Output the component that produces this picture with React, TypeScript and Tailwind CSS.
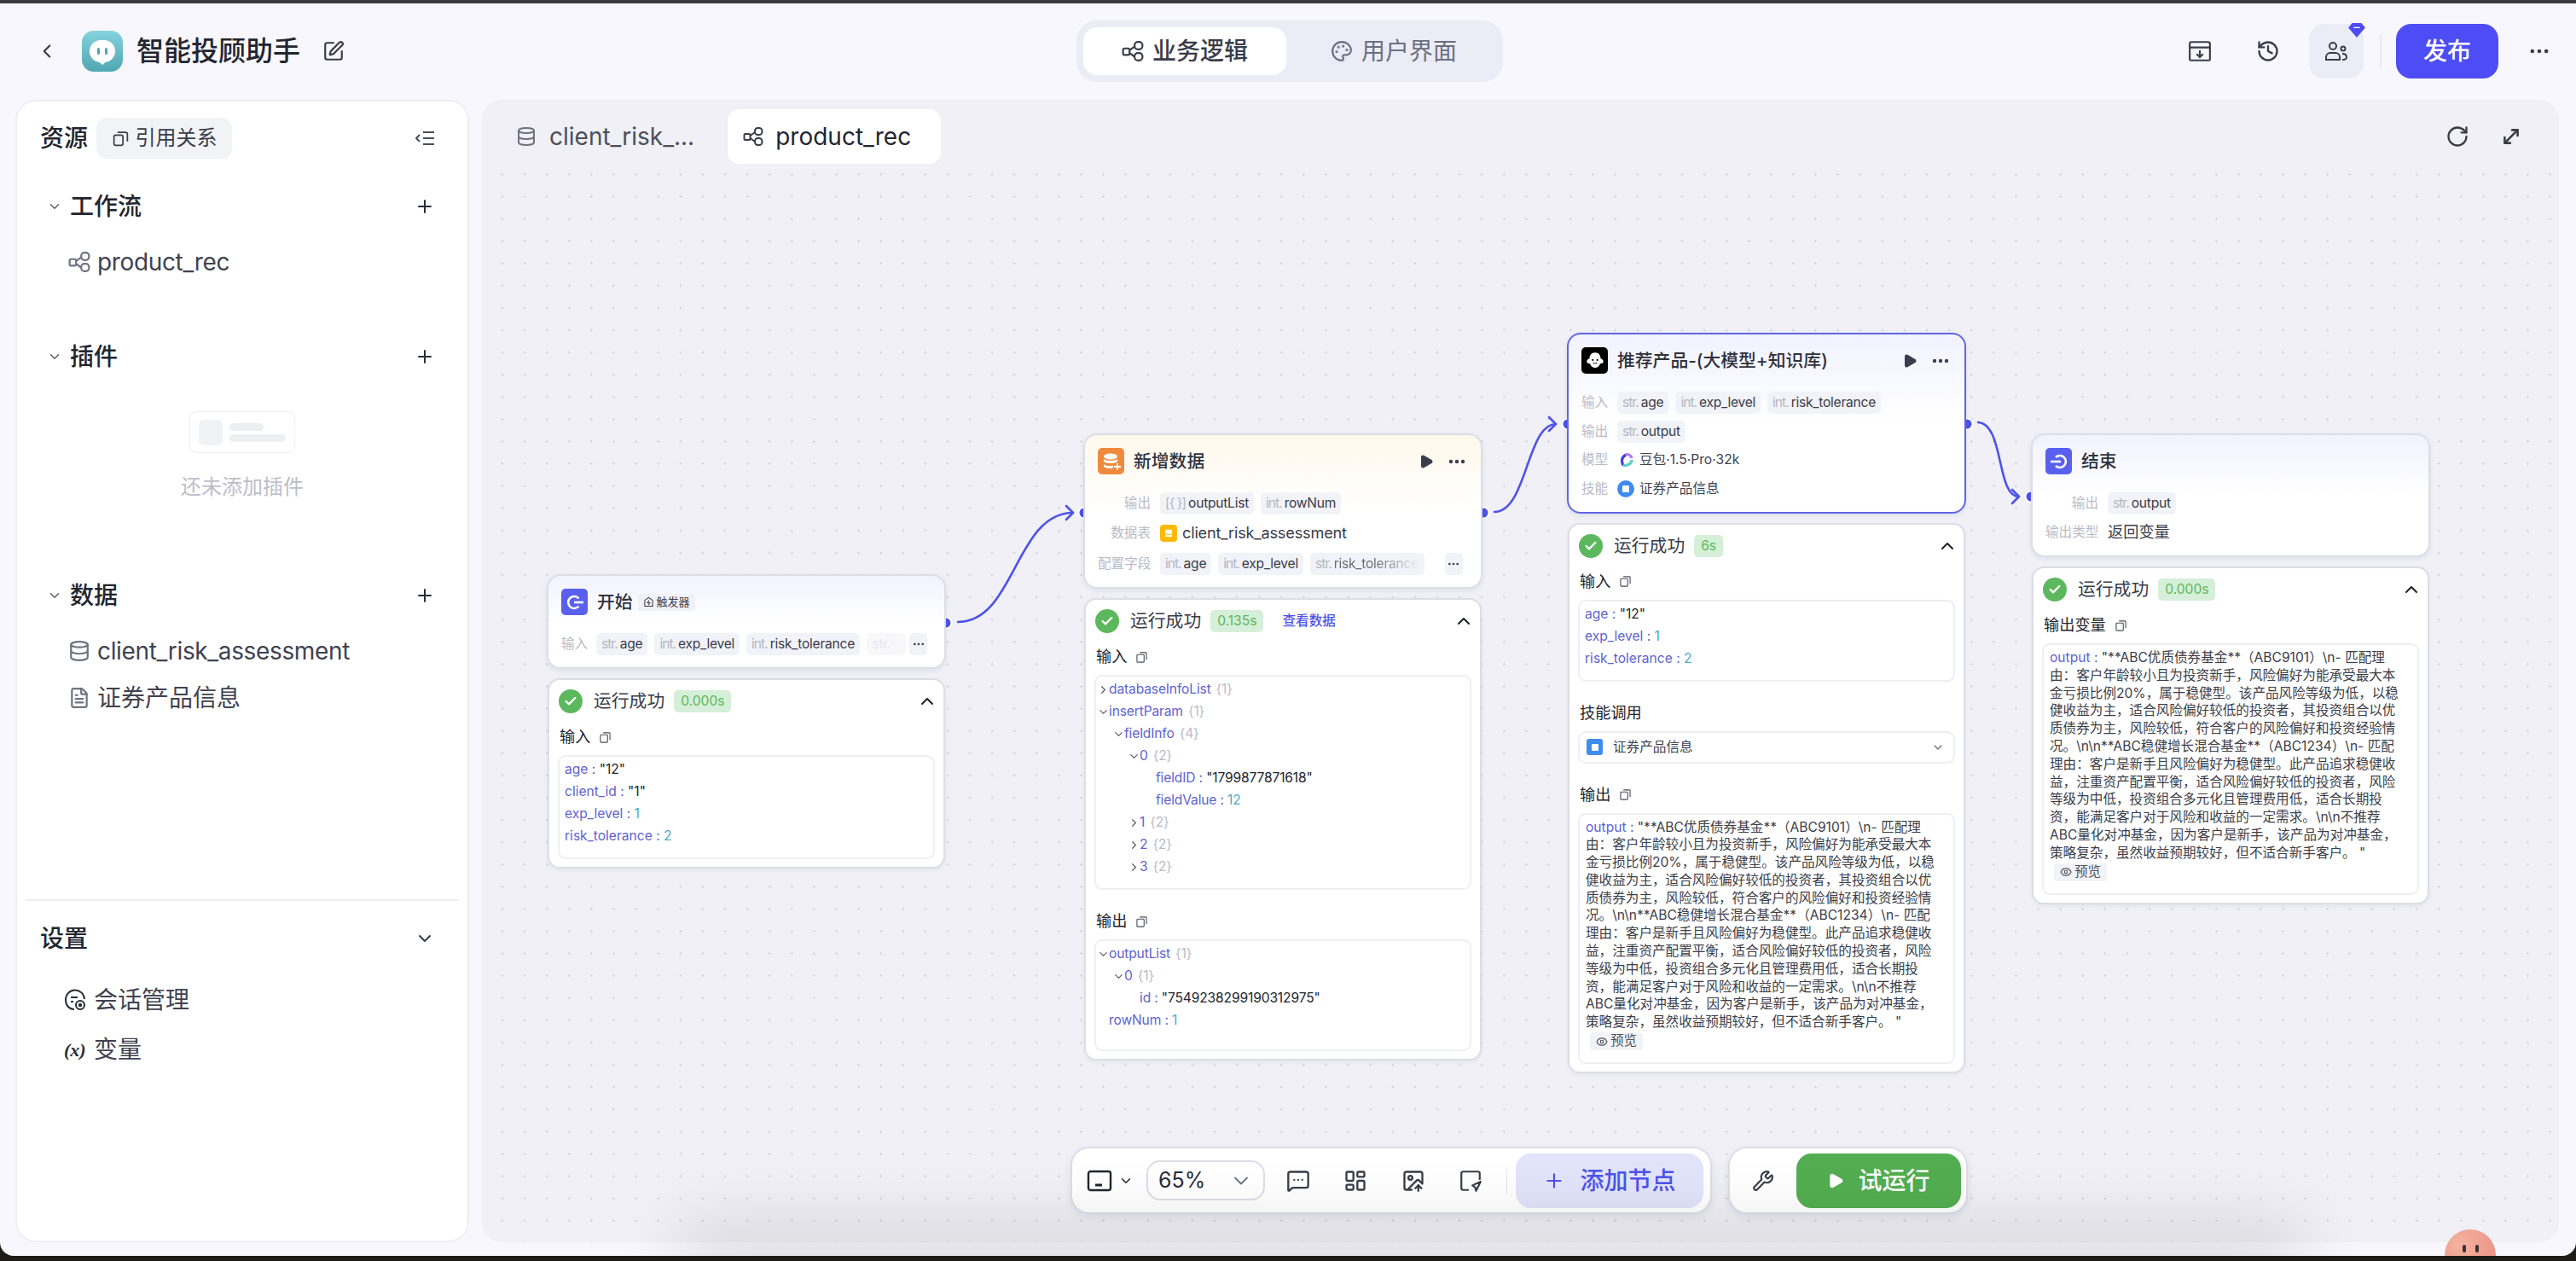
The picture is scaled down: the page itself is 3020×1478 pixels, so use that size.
import {
  Check,
  ChevronDown,
  ChevronLeft,
  ChevronRight,
  ChevronUp,
  Database,
  Ellipsis,
  Eye,
  FileText,
  History,
  ImageUp,
  LayoutDashboard,
  MessageSquareMore,
  MoveDiagonal,
  Palette,
  Play,
  Plus,
  RotateCw,
  SquarePen,
  Wrench,
} from "lucide-react"
import type { ReactNode } from "react"

const OUTPUT_LINES = [
  "由：客户年龄较小且为投资新手，风险偏好为能承受最大本",
  "金亏损比例20%，属于稳健型。该产品风险等级为低，以稳",
  "健收益为主，适合风险偏好较低的投资者，其投资组合以优",
  "质债券为主，风险较低，符合客户的风险偏好和投资经验情",
  "况。\\n\\n**ABC稳健增长混合基金**（ABC1234）\\n- 匹配",
  "理由：客户是新手且风险偏好为稳健型。此产品追求稳健收",
  "益，注重资产配置平衡，适合风险偏好较低的投资者，风险",
  "等级为中低，投资组合多元化且管理费用低，适合长期投",
  "资，能满足客户对于风险和收益的一定需求。\\n\\n不推荐",
  "ABC量化对冲基金，因为客户是新手，该产品为对冲基金，",
  "策略复杂，虽然收益预期较好，但不适合新手客户。 \"",
]

const INDENT = ["pl-[0px]", "pl-[18px]", "pl-[36px]", "pl-[55px]"]

const FlowIcon = ({ className }: { className?: string }) => (
  <svg viewBox="0 0 24 24" fill="none" stroke="currentColor" strokeWidth="2" className={className}>
    <rect x="1.5" y="9" width="7" height="7" rx="1.5" />
    <rect x="14" y="2" width="8.5" height="8" rx="3.5" />
    <rect x="14" y="14" width="8.5" height="8" rx="3.5" />
    <path d="M8.5 11 14 7M8.5 14l5.5 4" />
  </svg>
)

const CopyIcon = () => (
  <svg viewBox="0 0 14 14" fill="none" stroke="#4b4d5a" strokeWidth="1.2" className="ml-[11px] h-[13px] w-[13px]">
    <rect x="1" y="3.5" width="9" height="9.5" rx="1" />
    <path d="M4.5 1h7.5a1 1 0 0 1 1 1v8" />
  </svg>
)

const SuccessIcon = () => (
  <span className="flex h-[28px] w-[28px] shrink-0 items-center justify-center rounded-full bg-[#5cb85c]">
    <Check size={16} strokeWidth={3.5} className="text-white" />
  </span>
)

const Chip = ({ type, name, faded }: { type: string; name?: string; faded?: boolean }) => (
  <span className="flex h-[26px] shrink-0 items-center rounded-[5px] bg-[#f2f3f8] px-[6px] text-[15.6px] whitespace-nowrap">
    <span className="mr-[3px] tracking-[-1px] text-[#b5b7c3]">{type}</span>
    {name && (
      <span
        className={
          faded
            ? "w-[100px] overflow-hidden tracking-[-0.25px] text-[#6a6c78] [mask-image:linear-gradient(to_right,black_45%,transparent)]"
            : "tracking-[-0.25px] text-[#3a3c49]"
        }
      >
        {name}
      </span>
    )}
  </span>
)

const NodeCard = ({
  tint,
  selected,
  icon,
  title,
  titleExtra,
  actions,
  children,
}: {
  tint: string
  selected?: boolean
  icon: ReactNode
  title: string
  titleExtra?: ReactNode
  actions?: boolean
  children: ReactNode
}) => (
  <div
    className={`w-[468px] rounded-[16px] border-2 bg-linear-to-b ${tint} via-white to-white px-[14px] pt-[15px] pb-[14px] shadow-[0_2px_6px_rgba(30,30,60,0.08)] ${
      selected ? "border-[#6166e6]" : "border-[#dcdde6]"
    }`}
  >
    <div className="flex h-[31px] items-center pl-[1px]">
      {icon}
      <span className="ml-[11px] text-[20.8px] font-medium text-[#2f313c]">{title}</span>
      {titleExtra}
      {actions && (
        <div className="ml-auto flex items-center pr-[2px]">
          <Play size={18} fill="#3a3d4c" className="text-[#3a3d4c]" />
          <Ellipsis size={24} strokeWidth={2.4} className="ml-[15px] text-[#3a3d4c]" />
        </div>
      )}
    </div>
    {children}
  </div>
)

const IconTile = ({ className, children }: { className: string; children: ReactNode }) => (
  <span className={`flex h-[31px] w-[31px] shrink-0 items-center justify-center rounded-[5px] ${className}`}>
    {children}
  </span>
)

const RowLabel = ({ children, className }: { children: ReactNode; className: string }) => (
  <span className={`shrink-0 text-[15.6px] whitespace-nowrap text-[#b9bbc6] ${className}`}>{children}</span>
)

const ResultPanel = ({ time, link, children }: { time: string; link?: boolean; children: ReactNode }) => (
  <div className="mx-[1px] mt-[11px] w-[466px] rounded-[14px] border-2 border-[#dcdde6] bg-white px-[10px] pt-[11px] pb-[9px] shadow-[0_2px_5px_rgba(30,30,60,0.06)]">
    <div className="flex h-[28px] items-center pl-[1px]">
      <SuccessIcon />
      <span className="ml-[13px] text-[20.8px] text-[#3a3c48]">运行成功</span>
      <span className="ml-[11px] flex h-[26px] items-center rounded-[5px] bg-[#d6efd8] px-[8px] text-[15.6px] text-[#5cb85c]">
        {time}
      </span>
      {link && <span className="ml-[22px] text-[15.6px] font-medium text-[#4d53e8]">查看数据</span>}
      <ChevronUp size={24} strokeWidth={2} className="-mr-[3px] ml-auto text-[#1f2129]" />
    </div>
    {children}
  </div>
)

const Section = ({ label, first, copy = true }: { label: string; first?: boolean; copy?: boolean }) => (
  <div className={`flex h-[24px] items-center pl-[2px] ${first ? "mt-[16px]" : "mt-[25px]"} mb-[9px]`}>
    <span className="text-[18.2px] text-[#22242c]">{label}</span>
    {copy && <CopyIcon />}
  </div>
)

const Box = ({ tall, children }: { tall?: boolean; children: ReactNode }) => (
  <div
    className={`rounded-[9px] border-2 border-[#eeeff3] px-[6px] pt-[2px] text-[15.6px] ${
      tall ? "pb-[21px]" : "pb-[12px]"
    }`}
  >
    {children}
  </div>
)

const KV = ({ k, v, num }: { k: string; v: string; num?: boolean }) => (
  <div className="flex h-[26px] items-center whitespace-pre">
    <span className="text-[#6063cf]">{k} : </span>
    <span className={num ? "text-[#4fa9c6]" : "text-[#23252d]"}>{v}</span>
  </div>
)

const Tree = ({
  depth,
  open,
  closed,
  k,
  count,
  v,
  num,
}: {
  depth: number
  open?: boolean
  closed?: boolean
  k: string
  count?: string
  v?: string
  num?: boolean
}) => (
  <div className={`-ml-[2px] flex h-[26px] items-center tracking-[-0.15px] whitespace-pre ${INDENT[depth]}`}>
    <span className="flex w-[11px] shrink-0 items-center text-[#5f616f]">
      {open && <ChevronDown size={15} className="-ml-[3px] shrink-0" />}
      {closed && <ChevronRight size={15} className="-ml-[3px] shrink-0" />}
    </span>
    <span className="text-[#6063cf]">{v ? `${k} : ` : k}</span>
    {count && <span className="ml-[6px] text-[#b9bbc6]">{count}</span>}
    {v && <span className={num ? "text-[#4fa9c6]" : "text-[#23252d]"}>{v}</span>}
  </div>
)

const LongOutput = () => (
  <div className="rounded-[9px] border-2 border-[#eeeff3] px-[7px] pt-[5px] pb-[14px] text-[15.6px] leading-[20.8px] text-[#3b3d48]">
    <div className="whitespace-pre">
      <span className="text-[#6063cf]">output : </span>
      {'"**ABC优质债券基金**（ABC9101）\\n- 匹配理'}
    </div>
    {OUTPUT_LINES.map((line) => (
      <div key={line} className="whitespace-pre">
        {line}
      </div>
    ))}
    <div className="mt-[1px] ml-[5px] flex h-[21px] w-[62px] items-center justify-center gap-[3px] rounded-[4px] bg-[#f2f3f7] text-[#4e505c]">
      <Eye size={14} />
      预览
    </div>
  </div>
)

const NavRow = ({ children, className }: { children: ReactNode; className: string }) => (
  <div className={`flex h-[48px] items-center text-[28px] text-[#3f424f] ${className}`}>{children}</div>
)

const SectionHead = ({ title, className }: { title: string; className: string }) => (
  <div className={`flex h-[40px] items-center pl-[35px] pr-[38px] ${className}`}>
    <ChevronDown size={18} className="text-[#5c5f6c]" />
    <span className="ml-[9px] text-[28px] font-medium text-[#23252e]">{title}</span>
    <Plus size={24} className="ml-auto text-[#2b2d38]" />
  </div>
)

const Sidebar = () => (
  <aside className="flex w-[532px] shrink-0 flex-col rounded-[24px] border-2 border-[#eeeff5] bg-white pt-[19px]">
    <div className="flex h-[48px] items-center pl-[27px] pr-[37px]">
      <span className="text-[28px] font-medium text-[#23252e]">资源</span>
      <span className="ml-[10px] flex h-[48px] w-[159px] items-center justify-center gap-[7px] rounded-[12px] bg-[#f2f3f7] text-[24px] text-[#3a3c48]">
        <svg viewBox="0 0 20 20" fill="none" stroke="currentColor" strokeWidth="1.6" className="h-[21px] w-[21px]">
          <rect x="2.5" y="6" width="10" height="11.5" rx="2" />
          <path d="M6.5 3h9a2 2 0 0 1 2 2v8" />
        </svg>
        引用关系
      </span>
      <svg viewBox="0 0 24 24" fill="none" stroke="#4b4d5a" strokeWidth="2" className="ml-auto h-[24px] w-[24px]">
        <path d="M5 8l-4 4 4 4M9 5h13M9 12h13M9 19h13" />
      </svg>
    </div>
    <SectionHead title="工作流" className="mt-[36px]" />
    <NavRow className="mt-[21px] pl-[60px]">
      <FlowIcon className="h-[26px] w-[26px] text-[#6f7280]" />
      <span className="ml-[8px] tracking-[-0.35px]">product_rec</span>
    </NavRow>
    <SectionHead title="插件" className="mt-[67px]" />
    <div className="mt-[44px] flex h-[49px] w-[124px] items-center gap-[8px] self-center rounded-[8px] border border-[#f0f0f4] px-[10px]">
      <span className="h-[30px] w-[30px] rounded-[6px] bg-[#f1f2f5]" />
      <span className="flex flex-col gap-[4px]">
        <span className="h-[9px] w-[40px] rounded-full bg-[#eeeff2]" />
        <span className="h-[9px] w-[66px] rounded-full bg-[#eeeff2]" />
      </span>
    </div>
    <div className="mt-[24px] h-[32px] text-center text-[24px] leading-[32px] text-[#bcbec9]">还未添加插件</div>
    <SectionHead title="数据" className="mt-[91px]" />
    <NavRow className="mt-[21px] pl-[60px]">
      <Database size={26} className="text-[#6f7280]" />
      <span className="ml-[8px] tracking-[-0.35px]">client_risk_assessment</span>
    </NavRow>
    <NavRow className="mt-[7px] pl-[60px]">
      <FileText size={26} className="text-[#6f7280]" />
      <span className="ml-[8px]">证券产品信息</span>
    </NavRow>
    <div className="mx-[10px] mt-[212px] h-[2px] bg-[#eeeff3]" />
    <div className="mt-[24px] flex h-[40px] items-center pl-[27px] pr-[38px]">
      <span className="text-[28px] font-medium text-[#23252e]">设置</span>
      <ChevronDown size={24} className="ml-auto text-[#3a3c48]" />
    </div>
    <NavRow className="mt-[28px] pl-[55px]">
      <svg viewBox="0 0 26 26" fill="none" stroke="#2b2d38" strokeWidth="2" className="h-[26px] w-[26px]">
        <path d="M12 24C6 24 2 19 2 13a11 11 0 0 1 22-1" />
        <path d="M8 10h8M8 15h3" />
        <circle cx="19" cy="19" r="5" />
        <circle cx="19" cy="19" r="1.2" fill="#2b2d38" />
      </svg>
      <span className="ml-[9px]">会话管理</span>
    </NavRow>
    <NavRow className="mt-[10px] pl-[55px]">
      <span className="w-[26px] font-['Liberation_Serif',serif] text-[22px] font-bold text-[#2b2d38] italic">(x)</span>
      <span className="ml-[9px]">变量</span>
    </NavRow>
  </aside>
)

const Connections = () => (
  <svg
    viewBox="0 0 2435 1339"
    fill="none"
    className="absolute top-0 left-0 h-[1339px] w-[2435px]"
  >
    <g stroke="#4d53e8" strokeWidth="2.6" strokeLinecap="round" strokeLinejoin="round">
      <path d="M558 612C625 612 625 484 693 484" />
      <path d="M685 476l8 8-8 8" />
      <path d="M1187 483C1225 483 1225 380 1259 380" />
      <path d="M1251 372l8 8-8 8" />
      <path d="M1754 378C1785 380 1775 465 1802 465" />
      <path d="M1794 457l8 8-8 8" />
    </g>
    <g fill="#4d53e8" stroke="#ffffff" strokeWidth="2">
      <circle cx="544" cy="613" r="6.5" />
      <circle cx="706" cy="484" r="6.5" />
      <circle cx="1174" cy="484" r="6.5" />
      <circle cx="1273" cy="380" r="6.5" />
      <circle cx="1741" cy="380" r="6.5" />
      <circle cx="1816" cy="465" r="6.5" />
    </g>
  </svg>
)

const StartNode = () => (
  <div className="absolute top-[556px] left-[76px]">
    <NodeCard
      tint="from-[#f1f2fe]"
      icon={
        <IconTile className="bg-[#5a60ee]">
          <svg viewBox="0 0 24 24" fill="none" stroke="white" strokeWidth="2.6" className="h-[24px] w-[24px]">
            <path d="M16.5 7.5a7 7 0 1 0 0 9" />
            <path d="M11 12h11" />
          </svg>
        </IconTile>
      }
      title="开始"
      titleExtra={
        <span className="ml-[6px] flex h-[20px] items-center gap-[3px] rounded-[4px] bg-[#f1f2f7] px-[6px] text-[13px] text-[#3a3c48]">
          <svg viewBox="0 0 14 14" fill="none" stroke="currentColor" strokeWidth="1.1" className="h-[13px] w-[13px]">
            <path d="M2 5l5-3.5L12 5v7.5H2z" />
            <path d="M7.5 5 5.5 8h3l-2 3" />
          </svg>
          触发器
        </span>
      }
    >
      <div className="mt-[21px] flex items-center pl-[1px]">
        <RowLabel className="w-[41px]">输入</RowLabel>
        <div className="flex gap-[8px]">
          <Chip type="str." name="age" />
          <Chip type="int." name="exp_level" />
          <Chip type="int." name="risk_tolerance" />
          <span className="flex h-[26px] w-[46px] items-center rounded-[5px] bg-[#f8f8fb] px-[6px] text-[15.6px] text-[#e6e7ee]">
            str.
          </span>
        </div>
        <span className="ml-[4px] flex h-[26px] w-[21px] items-center justify-center rounded-[5px] bg-[#f2f3f8]">
          <Ellipsis size={16} className="text-[#3a3c48]" />
        </span>
      </div>
    </NodeCard>
    <ResultPanel time="0.000s">
      <Section label="输入" first />
      <Box>
        <KV k="age" v={'"12"'} />
        <KV k="client_id" v={'"1"'} />
        <KV k="exp_level" v="1" num />
        <KV k="risk_tolerance" v="2" num />
      </Box>
    </ResultPanel>
  </div>
)

const AddDataNode = () => (
  <div className="absolute top-[391px] left-[705px]">
    <NodeCard
      tint="from-[#fff8ea]"
      actions
      icon={
        <IconTile className="bg-[#ef8a3d]">
          <svg viewBox="0 0 24 24" fill="white" className="h-[24px] w-[24px]">
            <ellipse cx="11" cy="6" rx="8" ry="3.5" />
            <path d="M3 9c2 2.5 14 2.5 16 0v3c-2 2.5-14 2.500-16 0zM3 15c2 2.500 9 2.500 11 1.500v3c-3 1-9 .5-11-1.500z" />
            <path d="M19 14v8M15 18h8" stroke="white" strokeWidth="1.8" />
          </svg>
        </IconTile>
      }
      title="新增数据"
    >
      <div className="mt-[21px] flex h-[26px] items-center pl-[1px]">
        <RowLabel className="w-[62px] text-right">输出</RowLabel>
        <div className="ml-[11px] flex gap-[8px]">
          <Chip type="[{ }]" name="outputList" />
          <Chip type="int." name="rowNum" />
        </div>
      </div>
      <div className="mt-[9px] flex h-[26px] items-center pl-[1px]">
        <RowLabel className="w-[62px] text-right">数据表</RowLabel>
        <span className="ml-[11px] flex h-[20px] w-[20px] items-center justify-center rounded-[4px] bg-[#ffb800]">
          <Database size={12} fill="white" className="text-[#ffb800]" />
        </span>
        <span className="ml-[6px] text-[18.2px] tracking-[-0.2px] text-[#3a3c49]">client_risk_assessment</span>
      </div>
      <div className="mt-[10px] flex h-[26px] items-center pl-[1px]">
        <RowLabel className="w-[62px] text-right">配置字段</RowLabel>
        <div className="ml-[11px] flex gap-[8px]">
          <Chip type="int." name="age" />
          <Chip type="int." name="exp_level" />
          <Chip type="str." name="risk_tolerance" faded />
        </div>
        <span className="ml-[24px] flex h-[26px] w-[21px] items-center justify-center rounded-[5px] bg-[#f2f3f8]">
          <Ellipsis size={16} className="text-[#3a3c48]" />
        </span>
      </div>
    </NodeCard>
    <ResultPanel time="0.135s" link>
      <Section label="输入" first />
      <Box>
        <Tree depth={0} closed k="databaseInfoList" count="{1}" />
        <Tree depth={0} open k="insertParam" count="{1}" />
        <Tree depth={1} open k="fieldInfo" count="{4}" />
        <Tree depth={2} open k="0" count="{2}" />
        <Tree depth={3} k="fieldID" v={'"1799877871618"'} />
        <Tree depth={3} k="fieldValue" v="12" num />
        <Tree depth={2} closed k="1" count="{2}" />
        <Tree depth={2} closed k="2" count="{2}" />
        <Tree depth={2} closed k="3" count="{2}" />
      </Box>
      <Section label="输出" />
      <Box tall>
        <Tree depth={0} open k="outputList" count="{1}" />
        <Tree depth={1} open k="0" count="{1}" />
        <Tree depth={2} k="id" v={'"7549238299190312975"'} />
        <Tree depth={0} k="rowNum" v="1" num />
      </Box>
    </ResultPanel>
  </div>
)

const LlmNode = () => (
  <div className="absolute top-[273px] left-[1272px]">
    <NodeCard
      tint="from-[#f1f2fe]"
      selected
      actions
      icon={
        <IconTile className="bg-black">
          <svg viewBox="0 0 24 24" className="h-[26px] w-[26px]">
            <path
              fill="white"
              d="M12 3c4 0 6 3 6 6.500 2 .5 3 2 3 3.500s-2 2-3.500 2c-1 3-3.500 4.500-5.500 4.500S7.500 18 6.500 15C5 15 3 14.500 3 13s1-3 3-3.500C6 6 8 3 12 3z"
            />
            <circle cx="9.500" cy="11" r="1" fill="black" />
            <circle cx="14.500" cy="11" r="1" fill="black" />
            <path d="M10 14c1 1 3 1 4 0" stroke="black" strokeWidth="1" fill="none" />
          </svg>
        </IconTile>
      }
      title="推荐产品-(大模型+知识库)"
    >
      <div className="mt-[21px] flex h-[26px] items-center pl-[1px]">
        <RowLabel className="w-[42px]">输入</RowLabel>
        <div className="flex gap-[8px]">
          <Chip type="str." name="age" />
          <Chip type="int." name="exp_level" />
          <Chip type="int." name="risk_tolerance" />
        </div>
      </div>
      <div className="mt-[7.5px] flex h-[26px] items-center pl-[1px]">
        <RowLabel className="w-[42px]">输出</RowLabel>
        <Chip type="str." name="output" />
      </div>
      <div className="mt-[7.5px] flex h-[26px] items-center pl-[1px] text-[15.6px] text-[#3f4150]">
        <RowLabel className="w-[42px]">模型</RowLabel>
        <svg viewBox="0 0 20 20" fill="none" strokeWidth="3.4" className="ml-[1px] h-[20px] w-[20px]">
          <path d="M6 16.500C3.500 12 4 7 9 4" stroke="#4d3fe0" />
          <path d="M9 4c3 -1 6 1 7 4" stroke="#b577ea" />
          <path d="M16 10c0 4-4 7-10 6.500" stroke="#63d0bf" />
        </svg>
        <span className="ml-[5px]">豆包·1.5·Pro·32k</span>
      </div>
      <div className="mt-[7.5px] flex h-[26px] items-center pl-[1px] text-[15.6px] text-[#3f4150]">
        <RowLabel className="w-[42px]">技能</RowLabel>
        <span className="flex h-[20px] w-[20px] items-center justify-center rounded-full bg-[#3f8cf0]">
          <span className="h-[8px] w-[8px] rounded-[1px] bg-white" />
        </span>
        <span className="ml-[6px]">证券产品信息</span>
      </div>
    </NodeCard>
    <ResultPanel time="6s">
      <Section label="输入" first />
      <Box>
        <KV k="age" v={'"12"'} />
        <KV k="exp_level" v="1" num />
        <KV k="risk_tolerance" v="2" num />
      </Box>
      <Section label="技能调用" copy={false} />
      <div className="flex h-[38px] items-center rounded-[9px] border-2 border-[#eeeff3] pr-[10px] pl-[8px] text-[15.6px] text-[#3f4150]">
        <span className="flex h-[19px] w-[19px] items-center justify-center rounded-[3px] bg-[#3f8cf0]">
          <span className="h-[8px] w-[8px] rounded-[1px] bg-white" />
        </span>
        <span className="ml-[12px]">证券产品信息</span>
        <ChevronDown size={16} className="ml-auto text-[#6f7180]" />
      </div>
      <Section label="输出" />
      <LongOutput />
    </ResultPanel>
  </div>
)

const EndNode = () => (
  <div className="absolute top-[391px] left-[1816px]">
    <NodeCard
      tint="from-[#f1f2fe]"
      icon={
        <IconTile className="bg-[#5a60ee]">
          <svg viewBox="0 0 24 24" fill="none" stroke="white" strokeWidth="2.6" className="h-[24px] w-[24px]">
            <path d="M8 7a7 7 0 1 1 0 10" />
            <path d="M2 12h12" />
          </svg>
        </IconTile>
      }
      title="结束"
    >
      <div className="mt-[21px] flex h-[26px] items-center pl-[1px]">
        <RowLabel className="w-[62px] text-right">输出</RowLabel>
        <div className="ml-[11px]">
          <Chip type="str." name="output" />
        </div>
      </div>
      <div className="mt-[8px] flex h-[26px] items-center pl-[1px]">
        <RowLabel className="w-[62px] text-right">输出类型</RowLabel>
        <span className="ml-[11px] text-[18.2px] text-[#3a3c49]">返回变量</span>
      </div>
    </NodeCard>
    <ResultPanel time="0.000s">
      <Section label="输出变量" first />
      <LongOutput />
    </ResultPanel>
  </div>
)

const Toolbar = () => (
  <div className="absolute top-[1227px] left-[690px] flex gap-[19px]">
    <div className="flex h-[79px] w-[752px] items-center rounded-[22px] border-2 border-[#dcdde6] bg-white pr-[6px] pl-[17px] shadow-[0_3px_10px_rgba(30,30,60,0.08)]">
      <svg viewBox="0 0 30 26" fill="none" stroke="#23252e" strokeWidth="2.4" className="h-[26px] w-[30px]">
        <rect x="2" y="2" width="26" height="22" rx="2.500" />
        <path d="M10 18h8" strokeWidth="3" />
      </svg>
      <ChevronDown size={18} className="ml-[7px] text-[#23252e]" />
      <div className="ml-[15px] flex h-[47px] w-[139px] items-center rounded-[16px] border-2 border-[#dcdde6] px-[12px] text-[25px] text-[#2b2d38]">
        65%
        <ChevronDown size={28} strokeWidth={1.6} className="ml-auto text-[#6f7180]" />
      </div>
      <MessageSquareMore size={28} className="ml-[25px] text-[#3a3c48]" />
      <LayoutDashboard size={28} className="ml-[39px] text-[#3a3c48]" />
      <ImageUp size={28} className="ml-[40px] text-[#3a3c48]" />
      <svg viewBox="0 0 26 26" fill="none" stroke="#3a3c48" strokeWidth="2" className="ml-[39px] h-[28px] w-[28px]">
        <path d="M11 23H5a2 2 0 0 1-2-2V5a2 2 0 0 1 2-2h16a2 2 0 0 1 2 2v7" />
        <path d="M24 14l-9 4 3 2 1 4z" strokeLinejoin="round" />
      </svg>
      <span className="ml-[28px] h-[32px] w-[1px] bg-[#e3e4ea]" />
      <div className="ml-[10px] flex h-[64px] w-[220px] items-center justify-center gap-[17px] rounded-[18px] bg-[#e2e4fb] text-[28px] font-medium text-[#4d53e8]">
        <Plus size={26} />
        添加节点
      </div>
    </div>
    <div className="flex h-[79px] w-[281px] items-center rounded-[22px] border-2 border-[#dcdde6] bg-white pr-[6px] pl-[26px] shadow-[0_3px_10px_rgba(30,30,60,0.08)]">
      <Wrench size={26} className="text-[#3a3c48]" />
      <div className="ml-auto flex h-[64px] w-[193px] items-center justify-center gap-[16px] rounded-[18px] bg-[#52ae50] text-[28px] font-medium text-white">
        <Play size={20} fill="white" />
        试运行
      </div>
    </div>
  </div>
)

const Canvas = () => (
  <main className="relative flex-1 rounded-[24px] bg-[#f0f0f6] bg-[radial-gradient(#c9cad5_0.9px,transparent_1.2px)] bg-[size:26.1px_26.1px] bg-[position:11px_-4px]">
    <div className="relative flex h-[75px] items-center rounded-t-[24px] bg-[#f0f0f6] pt-[11px] pr-[43px] pl-[40px]">
      <Database size={24} className="text-[#6f7280]" />
      <span className="ml-[15px] text-[28px] text-[#4b4e5b]">client_risk_...</span>
      <div className="ml-[39px] flex h-[64px] w-[250px] items-center rounded-[14px] bg-white pl-[18px] text-[28px] text-[#23252e]">
        <FlowIcon className="h-[24px] w-[24px] text-[#3a3c48]" />
        <span className="ml-[14px]">product_rec</span>
      </div>
      <RotateCw size={28} className="ml-auto text-[#3a3c48]" />
      <MoveDiagonal size={26} strokeWidth={2.4} className="ml-[36px] text-[#3a3c48]" />
    </div>
    <Connections />
    <StartNode />
    <AddDataNode />
    <LlmNode />
    <EndNode />
    <Toolbar />
  </main>
)

const Header = () => (
  <header className="flex h-[113px] shrink-0 items-center pb-[1px] text-[#23252e]">
    <div className="flex w-[1262px] items-center pl-[42px]">
      <ChevronLeft size={26} className="text-[#3a3c48]" />
      <span className="relative ml-[28px] flex h-[48px] w-[48px] items-center justify-center rounded-[14px] bg-linear-to-b from-[#84d3df] to-[#4fa7b1]">
        <span className="flex h-[26px] w-[30px] items-center justify-center gap-[6px] rounded-[14px] bg-white">
          <span className="h-[8px] w-[3px] rounded-full bg-[#4fa7b1]" />
          <span className="h-[8px] w-[3px] rounded-full bg-[#4fa7b1]" />
        </span>
        <span className="absolute top-[33px] left-[21px] h-[6px] w-[6px] rotate-45 bg-white" />
      </span>
      <span className="ml-[16px] text-[32px] font-medium">智能投顾助手</span>
      <SquarePen size={26} className="ml-[26px] text-[#3a3c48]" />
    </div>
    <div className="flex h-[72px] w-[500px] items-center rounded-[24px] bg-[#ebecf6] px-[8px] text-[28px]">
      <div className="flex h-[56px] w-[238px] items-center justify-center gap-[10px] rounded-[16px] bg-white font-medium text-[#3a3c48]">
        <FlowIcon className="h-[26px] w-[26px]" />
        业务逻辑
      </div>
      <div className="flex h-[56px] flex-1 items-center justify-center gap-[10px] pl-[6px] text-[#6c6f80]">
        <Palette size={26} />
        用户界面
      </div>
    </div>
    <div className="flex flex-1 items-center">
      <svg viewBox="0 0 26 26" fill="none" stroke="#3a3c48" strokeWidth="2" className="ml-[803px] h-[28px] w-[28px]">
        <path d="M2 9V5a2 2 0 0 1 2-2h18a2 2 0 0 1 2 2v4M2 9v13a1 1 0 0 0 1 1h20a1 1 0 0 0 1-1V9z" />
        <path d="M13 12v7M9.500 16l3.500 3.500 3.500-3.500" />
      </svg>
      <History size={28} className="ml-[52px] text-[#3a3c48]" />
      <span className="relative ml-[34px] flex h-[64px] w-[64px] items-center justify-center rounded-[18px] bg-[#ebecf6]">
        <svg viewBox="0 0 28 24" fill="none" stroke="#3a3c48" strokeWidth="2" className="h-[24px] w-[28px]">
          <circle cx="10" cy="6" r="4" />
          <path d="M2 22v-3a5 5 0 0 1 5-5h6a5 5 0 0 1 5 5v3z" />
          <circle cx="22" cy="9" r="2.500" />
          <path d="M21 15c3 0 5 1.500 5 4 0 2-2 3-5 3" />
        </svg>
        <svg viewBox="0 0 22 20" className="absolute -top-[1px] -right-[3px] h-[18px] w-[22px]">
          <path d="M5 0h12l5 6-11 13L0 6z" fill="#4d4cf5" />
          <path d="M7 6h8" stroke="white" strokeWidth="1.6" />
        </svg>
      </span>
      <span className="ml-[19px] h-[40px] w-[2px] bg-[#e8e9ef]" />
      <button className="ml-[17px] h-[64px] w-[120px] rounded-[18px] bg-[#4e4cf5] text-[28px] font-medium text-white">
        发布
      </button>
      <Ellipsis size={28} className="ml-[34px] text-[#3a3c48]" />
    </div>
  </header>
)

export default function App() {
  return (
    <div className="flex h-[1478px] w-[3020px] flex-col overflow-hidden bg-[#1d1c17] font-['Inter','Noto_Sans_CJK_SC',sans-serif]">
      <div className="h-[4px] shrink-0 bg-[#3b3b3d]" />
      <div className="relative flex h-[1468px] shrink-0 flex-col overflow-hidden rounded-b-[16px] bg-[#f7f7fd]">
        <Header />
        <div className="flex h-[1339px] gap-[15px] pr-[20px] pl-[18px]">
          <Sidebar />
          <Canvas />
        </div>
        <div className="pointer-events-none absolute right-[320px] bottom-[-20px] left-[800px] h-[50px] bg-black/15 blur-2xl" />
        <span className="absolute top-[1437px] left-[2866px] flex h-[60px] w-[60px] justify-center gap-[11px] rounded-full bg-radial-[at_30%_30%] from-[#f5b3a0] to-[#e98a7c] pt-[18px]">
          <span className="h-[9px] w-[4px] rounded-full bg-[#3a3036]" />
          <span className="h-[9px] w-[4px] rounded-full bg-[#3a3036]" />
        </span>
      </div>
    </div>
  )
}
